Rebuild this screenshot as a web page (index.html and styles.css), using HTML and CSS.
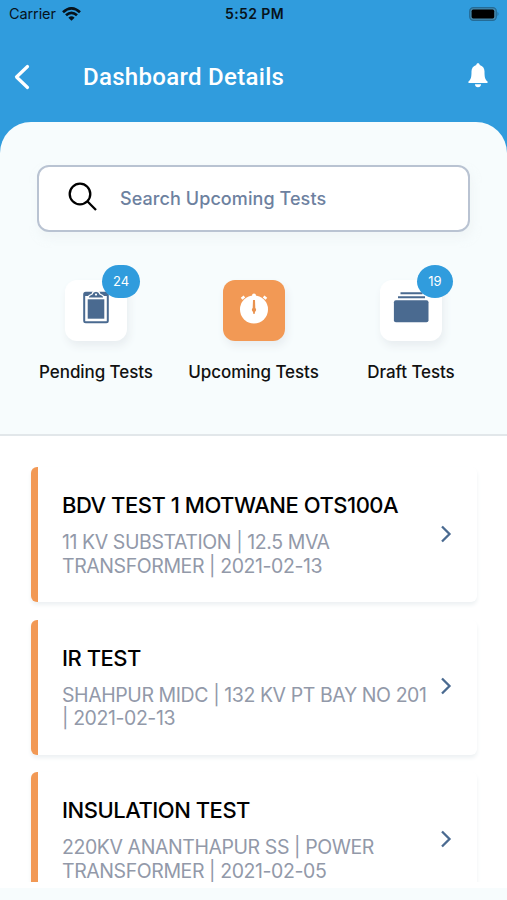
FILE: index.html
```html
<!DOCTYPE html>
<html lang="en">
<head>
<meta charset="utf-8">
<title>Dashboard Details</title>
<link rel="stylesheet" href="styles.css">
</head>
<body>
<div class="status">
  <div class="carrier"><span>Carrier</span>
    <svg width="19" height="14" viewBox="0 0 19 14"><g fill="none" stroke="#07131b" stroke-width="2.7"><path d="M1 5.2Q9.500-2.400 18 5.200"/><path d="M4 8.300Q9.500 3.300 15 8.300"/></g><path d="M6.400 10.700Q9.500 8 12.600 10.700L9.500 13.800Z" fill="#07131b"/></svg>
  </div>
  <div class="time">5:52 PM</div>
  <svg class="battery" width="31" height="14" viewBox="0 0 31 14"><rect x=".7" y=".7" width="26.600" height="12.600" rx="3.600" fill="#4689ad" stroke="#246b96" stroke-width="1.200"/><rect x="2.600" y="2.600" width="22.600" height="8.800" rx="1.600" fill="#000"/><path d="M28.500 4.800q2 2.200 0 4.400z" fill="#246b96"/></svg>
</div>
<header class="bar">
  <svg class="back" width="16" height="26" viewBox="0 0 16 26"><path d="M13.500 2.500L2.500 13l11 10.500" fill="none" stroke="#fff" stroke-width="3.200" stroke-linecap="round" stroke-linejoin="round"/></svg>
  <h1>Dashboard Details</h1>
  <svg class="bell" width="20" height="25" viewBox="0 0 20 25"><path d="M10 .3c1 0 1.700.7 1.700 1.600 3 .8 4.800 3.300 4.800 6.300 0 6 .4 7.800 3 10.400.5.700.2 1.400-.6 1.400H1.100c-.8 0-1.100-.7-.6-1.400 2.600-2.600 3-4.400 3-10.400 0-3 1.800-5.500 4.800-6.300 0-.9.700-1.600 1.700-1.600zM6.900 21.300h6.200c-.2 1.800-1.300 3-3.100 3s-2.900-1.200-3.100-3z" fill="#fff"/></svg>
</header>
<main>
  <section class="top">
    <div class="search">
      <svg width="30" height="30" viewBox="0 0 30 30"><g fill="none" stroke="#000" stroke-width="2.300"><circle cx="12" cy="12" r="10.300"/><path d="M19.300 19.300L28 28"/></g></svg>
      <span>Search Upcoming Tests</span>
    </div>
    <nav class="tabs">
      <div class="tab">
        <div class="tile"><svg width="28" height="34" viewBox="0 0 28 34"><rect x="2.200" y="2.700" width="23.600" height="29.600" rx="1.500" fill="#fff" stroke="#4a6a90" stroke-width="2"/><path d="M3 2h22v4H3z" fill="#4a6a90"/><path d="M5.700 9.300h16.600v19.400H5.700z" fill="#4a6a90"/><path d="M6 8c.3-3 2-3.300 4-3.800C11 .2 17 .2 18 4.200c2 .5 3.700.8 4 3.800z" fill="#4a6a90" stroke="#fff" stroke-width="1.200"/><circle cx="14" cy="4.600" r="1.100" fill="#fff"/></svg><b class="badge wide">24</b></div>
        <p>Pending Tests</p>
      </div>
      <div class="tab">
        <div class="tile on"><svg width="32" height="36" viewBox="0 0 32 36"><circle cx="16" cy="19.500" r="14" fill="#fff"/><circle cx="16" cy="5.500" r="2" fill="#fff"/><path d="M3.600 8.700l2.800-2.200M28.400 8.700l-2.800-2.200" stroke="#fff" stroke-width="2.600"/><path d="M15 10h2l.3 8a2.500 2.500 0 0 1-.4 4v1.800h-1.800V22a2.500 2.500 0 0 1-.4-4z" fill="#e9924f"/></svg></div>
        <p>Upcoming Tests</p>
      </div>
      <div class="tab">
        <div class="tile"><svg width="36" height="34" viewBox="0 0 36 34"><path d="M7.500 3.300h22M5 7.300h27" stroke="#4a6a90" stroke-width="1.900"/><rect x=".9" y="10.200" width="34.600" height="22" rx="2" fill="#4a6a90"/></svg><b class="badge">19</b></div>
        <p>Draft Tests</p>
      </div>
    </nav>
  </section>
  <section class="panel">
    <div class="list">
      <article class="card">
        <div><h2>BDV TEST 1 MOTWANE OTS100A</h2><p>11 KV SUBSTATION | 12.5 MVA<br>TRANSFORMER | 2021-02-13</p></div>
        <svg class="go" width="12" height="18" viewBox="0 0 12 18"><path d="M2 1.500L9.500 9 2 16.500"/></svg>
      </article>
      <article class="card">
        <div><h2>IR TEST</h2><p>SHAHPUR MIDC | 132 KV PT BAY NO 201<br>| 2021-02-13</p></div>
        <svg class="go" width="12" height="18" viewBox="0 0 12 18"><path d="M2 1.500L9.500 9 2 16.500"/></svg>
      </article>
      <article class="card">
        <div><h2>INSULATION TEST</h2><p>220KV ANANTHAPUR SS | POWER<br>TRANSFORMER | 2021-02-05</p></div>
        <svg class="go" width="12" height="18" viewBox="0 0 12 18"><path d="M2 1.500L9.500 9 2 16.500"/></svg>
      </article>
    </div>
  </section>
</main>
</body>
</html>
```
FILE: styles.css
```css
* { box-sizing: border-box; }
body { margin: 0; width: 507px; height: 900px; overflow: hidden; background: #309cdd; font-family: Inter, "Liberation Sans", sans-serif; display: flex; flex-direction: column; }
h1, h2, p { margin: 0; }
svg { display: block; flex: none; }
.status { height: 27px; display: grid; grid-template-columns: 1fr auto 1fr; align-items: center; padding: 0 7px 0 9px; color: #07131b; font-size: 14.5px; }
.carrier { display: flex; align-items: center; gap: 6px; letter-spacing: -.1px; }
.time { font-weight: 600; font-size: 14px; letter-spacing: .4px; }
.battery { justify-self: end; }
.bar { height: 95px; display: flex; align-items: center; padding: 4px 19px 0 14px; color: #fff; }
.bar h1 { font: 500 24px/30px Roboto, sans-serif; letter-spacing: .3px; margin-left: 53px; flex: 1; }
.back { margin-top: 1px; }
.bell { margin-bottom: 3px; }
main { flex: 1; min-height: 0; background: #f7fcfd; border-radius: 31px 31px 0 0; display: flex; flex-direction: column; }
.top { height: 314px; padding: 43px 37px 0; border-bottom: 2px solid #e2e7ea; flex: none; }
.search { height: 67px; border: 2px solid #b9c3d2; border-radius: 12px; background: #fff; display: flex; align-items: center; padding-left: 29px; gap: 22px; color: #6d819f; font-size: 18px; font-weight: 500; letter-spacing: .08px; box-shadow: 2px 6px 8px #e9eff180; }
.search svg { margin-bottom: 4px; }
.tabs { display: grid; grid-template-columns: 118px 1fr 118px; margin-top: 48px; }
.tab { display: flex; flex-direction: column; align-items: center; white-space: nowrap; }
.tile { width: 62px; height: 61px; border-radius: 12px; background: #fff; position: relative; display: flex; justify-content: center; padding-top: 10px; box-shadow: 2px 5px 8px #e8edf0; }
.tile.on { background: #f29955; }
.badge { position: absolute; left: 37px; top: -15px; width: 36px; height: 33px; border-radius: 50%; background: #309cdd; color: #fff; font-size: 13px; font-weight: 400; line-height: 33px; text-align: center; }
.badge.wide { width: 38px; border-radius: 17px; }
.tab p { margin-top: 19.5px; font-size: 17px; line-height: 22px; font-weight: 500; letter-spacing: -.08px; color: #111; }
.panel { height: 452px; background: #fff; flex: none; }
.list { height: 446px; padding: 31px 30px 0 31px; overflow: hidden; }
.card { height: 135px; margin-bottom: 17.5px; border-left: 7px solid #f29955; border-radius: 6px; background: #fff; display: flex; align-items: center; justify-content: space-between; padding: 0 25px 0 24px; box-shadow: 0 3px 4px #edf1f3; }
.card > div { white-space: nowrap; width: 370px; flex: none; }
.card h2 { font-size: 22px; line-height: 28px; font-weight: 500; letter-spacing: -.48px; color: #000; }
.card p { margin-top: 12px; font-size: 19.5px; line-height: 23.500px; letter-spacing: -.42px; color: #9299a9; }
.go { margin: 0 0 2px 5px; }
.go path { fill: none; stroke: #4a6a90; stroke-width: 2.300; }
```
